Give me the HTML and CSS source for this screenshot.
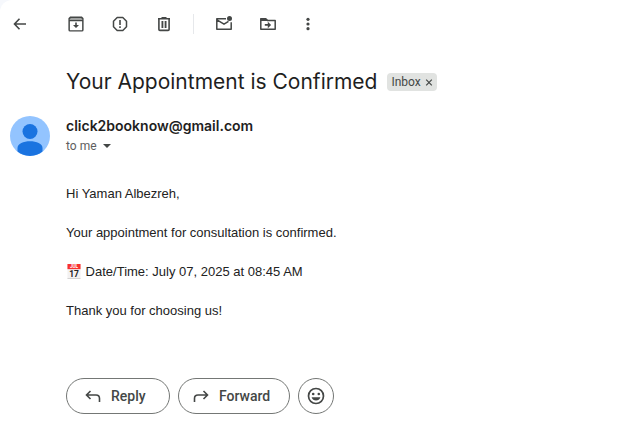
FILE: index.html
```html
<!DOCTYPE html>
<html lang="en">
<head>
<meta charset="utf-8">
<meta name="viewport" content="width=device-width, initial-scale=1">
<title>Your Appointment is Confirmed</title>
<link rel="stylesheet" href="styles.css">
</head>
<body>
<main class="mail">
  <nav class="toolbar" aria-label="Message actions">
    <button class="tool tool-back" aria-label="Back"><svg viewBox="0 0 20 20"><path d="M16 10H5M9.500 4.800L4.500 10l5 5.200" fill="none" stroke="currentColor" stroke-width="1.600"/></svg></button>
    <button class="tool" aria-label="Archive"><svg viewBox="0 0 20 20"><path d="M4.500 3h11L17 4.500V16q0 1-1 1H4q-1 0-1-1V4.500z" transform="translate(.2 .2) scale(.98)" fill="none" stroke="currentColor" stroke-width="1.500" stroke-linejoin="round"/><path d="M4 4h12v2H4z" opacity=".5"/><path d="M3 6h14v1.200H3zM9.200 8.500h1.600v2.500H13l-3 3-3-3h2.200z"/></svg></button>
    <button class="tool" aria-label="Report spam"><svg viewBox="0 0 20 20"><path d="M7.200 3.500h5.600l3.700 3.700v5.600l-3.700 3.700H7.200l-3.700-3.700V7.200z" fill="none" stroke="currentColor" stroke-width="1.500" stroke-linejoin="round"/><path d="M9.200 6h1.600v5H9.200zM9.200 12.300h1.600v1.600H9.200z"/></svg></button>
    <button class="tool" aria-label="Delete"><svg viewBox="0 0 20 20"><path d="M4.900 5v10.400q0 1 1 1h8.200q1 0 1-1V5" fill="none" stroke="currentColor" stroke-width="1.600"/><path d="M4 4h12v1.600H4zM7.500 3h5v1.500h-5zM7.500 7h1.500v7H7.500zM11 7h1.500v7H11z"/><path d="M9 7h2v7H9z" opacity=".35"/></svg></button>
    <span class="divider"></span>
    <button class="tool" aria-label="Mark as unread"><svg viewBox="0 0 20 20"><path d="M12 4.800H2.800v10.400h14.400V8.200M3 5.800l7 4.400 4.500-2.800" fill="none" stroke="currentColor" stroke-width="1.500" stroke-linejoin="round"/><circle cx="15.500" cy="4.500" r="2.500"/></svg></button>
    <button class="tool" aria-label="Move to"><svg viewBox="0 0 20 20"><path d="M2.800 4.800h5l1.700 1.600h7.700v8.800H2.800z" fill="none" stroke="currentColor" stroke-width="1.500" stroke-linejoin="round"/><path d="M2.500 4.500h5.300L9.500 7h-7zM6.800 10.100h3V7.800l3.300 3.200-3.300 3.200v-2.400h-3z"/></svg></button>
    <button class="tool tool-more" aria-label="More"><svg viewBox="0 0 20 20"><circle cx="10" cy="5.300" r="1.600"/><circle cx="10" cy="10" r="1.600"/><circle cx="10" cy="14.700" r="1.600"/></svg></button>
  </nav>

  <header class="subject">
    <h1 class="title">Your Appointment is Confirmed</h1>
    <span class="label">Inbox
      <button class="label-close" aria-label="Remove label Inbox"><svg viewBox="0 0 8 8"><path d="M1.200 1.700l5.600 5.600M6.800 1.700L1.200 7.300" fill="none" stroke="currentColor" stroke-width="1.200"/></svg></button>
    </span>
  </header>

  <article class="message">
    <svg class="avatar" viewBox="0 0 40 40" aria-hidden="true">
      <circle cx="20" cy="20" r="20" fill="#93c4ff"/>
      <circle cx="20" cy="15.500" r="7.500" fill="#1a73e0"/>
      <path d="M7.500 35.600V32c0-4.500 6-6.800 12.500-6.800S32.500 27.500 32.500 32v3.600A20 20 0 0 1 7.500 35.600z" fill="#1a73e0"/>
    </svg>
    <div class="content">
      <div class="sender">click2booknow@gmail.com</div>
      <button class="recipient">to me <svg class="caret" viewBox="0 0 8 4"><path d="M0 0h8L4 4z"/></svg></button>
      <div class="body">
        <p>Hi Yaman Albezreh,</p>
        <p>Your appointment for consultation is confirmed.</p>
        <p><svg class="calendar" viewBox="0 0 16 16" role="img" aria-label="Calendar"><path d="M1 5h14v10H1z" fill="#f3f1f1"/><path d="M1 15h14v1H1z" fill="#d2d0d0"/><path d="M1 0h14v5.500H1z" fill="#f8312f"/><text class="cal-month" x="8" y="4.500">JUL</text><text class="cal-day" x="8" y="13.500">17</text></svg> Date/Time: July 07, 2025 at 08:45 AM</p>
        <p>Thank you for choosing us!</p>
      </div>
      <div class="actions">
        <button class="pill pill-reply"><svg viewBox="0 0 20 20"><path d="M7.500 5L3.500 9l4 4M3.500 9H13q3.500 0 3.500 3.500V16" fill="none" stroke="currentColor" stroke-width="1.600"/></svg>Reply</button>
        <button class="pill pill-forward"><svg viewBox="0 0 20 20"><path d="M12.500 5l4 4-4 4M16.500 9H7q-3.500 0-3.500 3.500V16" fill="none" stroke="currentColor" stroke-width="1.600"/></svg>Forward</button>
        <button class="pill pill-round" aria-label="Add reaction"><svg viewBox="0 0 20 20"><circle cx="10" cy="10" r="7.500" fill="none" stroke="currentColor" stroke-width="1.700"/><circle cx="7.200" cy="8" r="1.300"/><circle cx="12.800" cy="8" r="1.300"/><path d="M5.600 11.300h8.800Q13.200 14.600 10 14.600T5.600 11.300z"/></svg></button>
      </div>
    </div>
  </article>
</main>
</body>
</html>
```
FILE: styles.css
```css
* { box-sizing: border-box; }

body {
  margin: 0;
  background: #f6f8fc;
  color: #1f1f1f;
  font-family: "Liberation Sans", Arial, sans-serif;
}

button {
  margin: 0;
  padding: 0;
  border: 0;
  background: none;
  color: inherit;
  font: inherit;
  cursor: pointer;
}

svg { fill: currentColor; }

.mail {
  min-height: 100vh;
  padding: 14px 10px 24px;
  border-top-left-radius: 12px;
  background: #fff;
}

.toolbar {
  display: flex;
  align-items: center;
  gap: 24px;
  height: 20px;
  color: #444746;
}

.tool, .tool svg {
  display: block;
  width: 20px;
  height: 20px;
}

.tool-back { margin-right: 12px; }
.tool-more { margin-left: -4px; }

.divider {
  width: 1px;
  height: 20px;
  margin: 0 -4px 0 -5px;
  background: #e6e8eb;
}

.subject {
  display: flex;
  align-items: center;
  gap: 10px;
  margin: 34px 0 20px 56px;
}

.title {
  margin: 0;
  font: 400 21px/28px Inter, Roboto, sans-serif;
}

.label {
  display: flex;
  align-items: center;
  gap: 4px;
  height: 18px;
  padding: 0 4px;
  border-radius: 4px;
  background: #e1e3e1;
  color: #444746;
  font: 12px/18px Roboto, sans-serif;
}

.label-close, .label-close svg {
  display: block;
  width: 8px;
  height: 8px;
}

.message {
  display: flex;
  gap: 16px;
}

.avatar {
  flex: none;
  width: 40px;
  height: 40px;
}

.content { flex: 1; }

.sender {
  font: 600 14px/20px Inter, Roboto, sans-serif;
}

.recipient {
  display: flex;
  align-items: center;
  gap: 6px;
  color: #5e5e5e;
  font: 12px/20px Roboto, sans-serif;
}

.caret {
  width: 8px;
  height: 4px;
  color: #444746;
}

.body {
  margin-top: 28px;
  color: #222;
  font-size: 13px;
  line-height: 19px;
}

.body p { margin: 0 0 20px; }

.calendar {
  width: 16px;
  height: 15px;
  vertical-align: -3px;
}

.cal-month, .cal-day {
  font-family: Roboto, sans-serif;
  font-weight: 700;
  text-anchor: middle;
}

.cal-month { fill: #fff; font-size: 5px; }
.cal-day { fill: #222; font-size: 9px; }

.actions {
  display: flex;
  gap: 8px;
  margin-top: 58px;
}

.pill {
  display: flex;
  align-items: center;
  gap: 8px;
  height: 36px;
  border: 1px solid #747775;
  border-radius: 18px;
  color: #444746;
  font: 500 14px/20px Roboto, sans-serif;
}

.pill svg {
  width: 20px;
  height: 20px;
}

.pill-reply {
  min-width: 104px;
  padding: 0 16px;
}

.pill-forward {
  min-width: 112px;
  padding: 0 12px;
}

.pill-round {
  justify-content: center;
  width: 36px;
}
```
